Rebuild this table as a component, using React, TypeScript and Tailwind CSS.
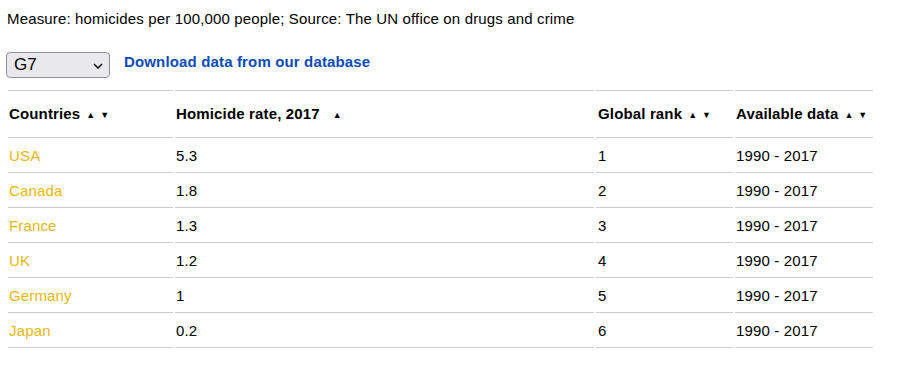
import React from "react";

const rows = [
  ["USA", "5.3", "1"],
  ["Canada", "1.8", "2"],
  ["France", "1.3", "3"],
  ["UK", "1.2", "4"],
  ["Germany", "1", "5"],
  ["Japan", "0.2", "6"],
];

function Arrows({ up = true, down = true }: { up?: boolean; down?: boolean }) {
  return (
    <span className="ml-[6px] inline-flex items-center gap-[5px] text-[9px] tracking-normal align-middle relative -top-[1px]">
      {up && <span>▲</span>}
      {down && <span>▼</span>}
    </span>
  );
}

export default function App() {
  return (
    <div className="bg-white text-black pl-[6px] pt-[11px] text-[15px] leading-[16px] tracking-[0.15px]" style={{ fontFamily: '"Liberation Sans", Arial, sans-serif' }}>
      <p className="pl-[1px]">Measure: homicides per 100,000 people; Source: The UN office on drugs and crime</p>
      <div className="flex items-start mt-[25px] h-[26px]">
        <div className="relative w-[104px] h-[26px] rounded-[4px] border border-[#8f8f9d] bg-[#e9e9ed] flex items-center pl-[7px] text-[17px] tracking-normal">
          G7
          <svg className="absolute right-[6px] top-[10px]" width="10" height="6" viewBox="0 0 10 6">
            <path d="M1 1 L5 5 L9 1" fill="none" stroke="#111" strokeWidth="1.6" />
          </svg>
        </div>
        <a className="ml-[14px] mt-[2px] font-bold text-[#0b4bb5]">Download data from our database</a>
      </div>
      <table className="mt-[12px] border-separate [border-spacing:2px_0] text-left">
        <thead>
          <tr>
            <th className="w-[165px] h-[48px] border-y border-[#cccccc] pl-[1px] pt-[2px] font-bold">Countries<Arrows /></th>
            <th className="w-[419px] border-y border-[#cccccc] pl-[1px] pt-[2px] font-bold">Homicide rate, 2017<span className="ml-[7px]"><Arrows down={false} /></span></th>
            <th className="w-[137px] border-y border-[#cccccc] pl-[2px] pt-[2px] font-bold">Global rank<Arrows /></th>
            <th className="w-[138px] border-y border-[#cccccc] pl-[1px] pt-[2px] font-bold">Available data<Arrows /></th>
          </tr>
        </thead>
        <tbody>
          {rows.map((r) => (
            <tr key={r[0]}>
              <td className="h-[35px] border-b border-[#cccccc] pl-[1px] pt-[2px] text-[#e6b80c]">{r[0]}</td>
              <td className="border-b border-[#cccccc] pl-[1px] pt-[2px]">{r[1]}</td>
              <td className="border-b border-[#cccccc] pl-[2px] pt-[2px]">{r[2]}</td>
              <td className="border-b border-[#cccccc] pl-[1px] pt-[2px]">1990 - 2017</td>
            </tr>
          ))}
        </tbody>
      </table>
    </div>
  );
}
